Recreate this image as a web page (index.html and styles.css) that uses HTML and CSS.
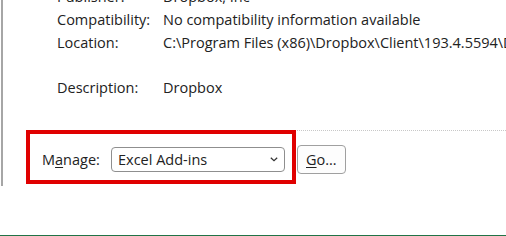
FILE: index.html
```html
<!DOCTYPE html>
<html>
<head>
<meta charset="utf-8">
<link rel="stylesheet" href="styles.css">
</head>
<body>
<div class="window">
  <div class="panel">
    <div class="details">
      <div class="row"><span class="label">Publisher:</span><span class="value">Dropbox, Inc</span></div>
      <div class="row"><span class="label">Compatibility:</span><span class="value">No compatibility information available</span></div>
      <div class="row"><span class="label">Location:</span><span class="value">C:\Program Files (x86)\Dropbox\Client\193.4.5594\Dropbox.exe</span></div>
      <div class="row blank"></div>
      <div class="row"><span class="label">Description:</span><span class="value">Dropbox</span></div>
    </div>
    <div class="manage">
      <div class="manage-row">
        <span class="manage-label">M<u>a</u>nage:</span>
        <div class="select">
          <span>Excel Add-ins</span>
          <svg class="chev" width="8" height="5" viewBox="0 0 8 5"><path d="M0.8 0.8 L4 3.8 L7.2 0.8" fill="none" stroke="#333" stroke-width="1.2"/></svg>
        </div>
        <div class="go"><u>G</u>o…</div>
      </div>
      <div class="highlight"></div>
    </div>
  </div>
  <div class="bottom"></div>
</div>
</body>
</html>
```
FILE: styles.css
```css
html, body {
  margin: 0;
  padding: 0;
  background: #ffffff;
}
body {
  font-family: "Open Sans", "Noto Sans", sans-serif;
  font-size: 14.5px;
  color: #222222;
  width: 506px;
  height: 236px;
  overflow: hidden;
}
.window {
  height: 236px;
  display: flex;
  flex-direction: column;
}
.panel {
  height: 186px;
  margin-left: 1px;
  border-left: 2px solid #a6a6a6;
  position: relative;
  overflow: hidden;
  flex: none;
}
.details {
  margin-top: -15px;
  padding-left: 54px;
}
.row {
  display: flex;
  height: 23px;
  line-height: 23px;
  white-space: nowrap;
}
.row.blank {
  height: 22px;
}
.label {
  width: 106px;
  flex: none;
}
.value {
  flex: none;
}
.manage {
  position: absolute;
  left: 37px;
  right: 0;
  top: 130px;
  border-top: 1px dotted #c8c8c8;
}
.manage-row {
  display: flex;
  align-items: center;
  padding-top: 14px;
  padding-left: 2px;
}
.manage-label {
  width: 69px;
  flex: none;
}
.manage-label u, .go u {
  text-underline-offset: 2px;
}
.select {
  box-sizing: border-box;
  width: 174px;
  height: 25px;
  border: 1px solid #8f8f8f;
  border-radius: 4px;
  display: flex;
  align-items: center;
  justify-content: space-between;
  padding: 0 6px 0 6px;
  background: #fff;
}
.go {
  box-sizing: border-box;
  margin-left: 12px;
  width: 49px;
  height: 29px;
  border: 1px solid #a0a0a0;
  border-radius: 4px;
  display: flex;
  align-items: center;
  padding-left: 8px;
  background: #fdfdfd;
}
.highlight {
  position: absolute;
  left: -14px;
  top: -1px;
  width: 270px;
  height: 54px;
  box-sizing: border-box;
  border: 4px solid #e00000;
}
.bottom {
  flex: 1;
  border-bottom: 1px solid #217346;
}
```
